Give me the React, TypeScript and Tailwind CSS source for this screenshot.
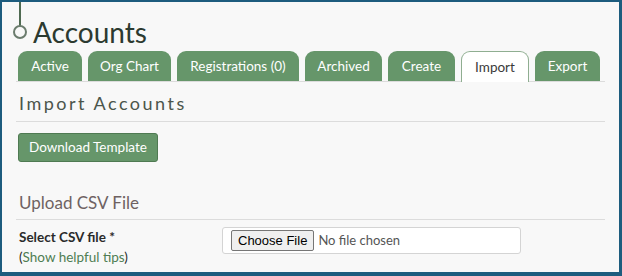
const tabs = [
  { label: 'Active', w: 'w-[64px]' },
  { label: 'Org Chart', w: 'w-[83px]' },
  { label: 'Registrations (0)', w: 'w-[122px]' },
  { label: 'Archived', w: 'w-[77px]' },
  { label: 'Create', w: 'w-[67px]' },
  { label: 'Import', w: 'w-[68px]' },
  { label: 'Export', w: 'w-[65px]' },
];

export default function App() {
  return (
    <div className="relative h-[276px] w-[622px] overflow-hidden border-t-2 border-l-2 border-r-[3px] border-b-[4px] border-[#1d5c7e] bg-[#f8f8f8] font-['Lato',sans-serif]">
      {/* timeline decoration */}
      <div className="absolute left-[17px] top-0 h-[25px] w-[2px] bg-[#4f6a52]" />
      <div className="absolute left-[11px] top-[23px] h-[14px] w-[14px] rounded-full border-2 border-[#6b7c6d] bg-[#f8f8f8]" />

      <div className="pl-[31px] pt-[14px]">
        <h1 className="text-[28px] leading-[32px] text-[#2c3a30]">Accounts</h1>
      </div>

      <div className="mx-[14px] mt-[3px] flex gap-[6px] border-b border-[#dcdcdc] pl-[2px]">
        {tabs.map((t) => (
          <div
            key={t.label}
            className={
              t.label === 'Import'
                ? `mb-[-1px] flex h-[31px] shrink-0 items-center justify-center whitespace-nowrap rounded-t-[9px] border border-b-0 border-[#8fae91] bg-white text-[13.5px] text-[#3a3a3a] ${t.w}`
                : `flex h-[30px] shrink-0 items-center justify-center whitespace-nowrap rounded-t-[9px] bg-[#66966a] text-[13.5px] text-white ${t.w}`
            }
          >
            {t.label}
          </div>
        ))}
      </div>

      <div className="mx-[14px] border-b border-[#dcdcdc] pb-[7px] pt-[10px]">
        <h2 className="pl-[3px] text-[18px] leading-[22px] tracking-[2.5px] text-[#4b554b]">Import Accounts</h2>
      </div>

      <div className="px-[16px] pt-[11px]">
        <button className="h-[29px] rounded-[3px] border border-[#4f7a52] bg-[#66966a] px-[10px] text-[13.5px] text-white">
          Download Template
        </button>
      </div>

      <div className="mx-[14px] mt-[30px] border-b border-[#dcdcdc] pb-[5px]">
        <h3 className="pl-[3px] text-[17px] leading-[22px] text-[#6e6262]">Upload CSV File</h3>
      </div>

      <div className="flex px-[17px] pt-[7px]">
        <div className="w-[203px] text-[13.5px] leading-[20px]">
          <div className="font-bold text-[#2a2a2a]">Select CSV file *</div>
          <div className="text-[#2a2a2a]">
            (<span className="text-[#4e7d52]">Show helpful tips</span>)
          </div>
        </div>
        <div className="flex h-[27px] w-[299px] items-center rounded-[3px] border border-[#d4d4d4] bg-white pl-[8px]">
          <span className="flex h-[21px] items-center rounded-[2px] border border-[#767676] bg-[#efefef] px-[6px] font-['Liberation_Sans',sans-serif] text-[13px] text-black">
            Choose File
          </span>
          <span className="pl-[4px] text-[13px] text-[#555]">No file chosen</span>
        </div>
      </div>
    </div>
  );
}
